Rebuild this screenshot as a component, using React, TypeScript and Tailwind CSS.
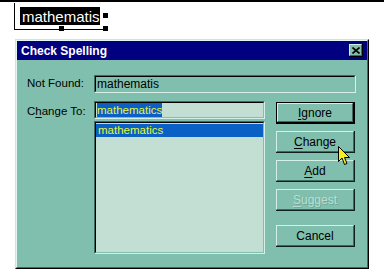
import React from "react";

const font = { fontFamily: '"Liberation Sans", Arial, sans-serif' };

function Btn({
  label,
  ul,
  rest,
  isDefault,
  disabled,
  className = "",
}: {
  label?: string;
  ul?: string;
  rest?: string;
  isDefault?: boolean;
  disabled?: boolean;
  className?: string;
}) {
  const inner = (
    <div className="flex h-full w-full items-center justify-center border border-t-[#d4efe6] border-l-[#d4efe6] border-r-[#3c6a5e] border-b-[#3c6a5e] bg-[#80bfae]">
      <span
        className={`text-[12px] ${disabled ? "text-[#b8dfd2] [text-shadow:1px_1px_0_#6fa898]" : "text-black"}`}
      >
        {ul ? <span className="underline underline-offset-2">{ul}</span> : null}
        {rest ?? label}
      </span>
    </div>
  );
  return (
    <div
      className={`h-[22px] w-[79px] ${
        isDefault
          ? "border border-black border-b-2 border-r-2"
          : "border-b border-r border-[#10201c]"
      } ${className}`}
    >
      {inner}
    </div>
  );
}

function Sunken({ className = "", children }: { className?: string; children?: React.ReactNode }) {
  return (
    <div
      className={`border border-t-[#3e6c60] border-l-[#3e6c60] border-r-[#d6efe7] border-b-[#d6efe7] ${className}`}
    >
      <div className="h-full w-full border border-t-black border-l-black border-r-[#80bfae] border-b-[#80bfae]">
        {children}
      </div>
    </div>
  );
}

export default function App() {
  return (
    <div className="relative h-[280px] w-[384px] overflow-hidden border-t-2 border-black bg-white" style={font}>
      {/* text selection in document */}
      <div className="relative ml-[14px] mt-[1px] h-[27px] w-[90px] border-b border-l border-black pl-[5px] pt-[4px]">
        <div className="flex h-[18px] w-[80px] items-center bg-black pl-[2px] text-[15px] leading-none text-white">
          mathematis
        </div>
        <div className="absolute left-[88px] top-[10px] h-[5px] w-[5px] bg-black" />
        <div className="absolute left-[44px] top-[23px] h-[5px] w-[5px] bg-black" />
        <div className="absolute left-[88px] top-[23px] h-[5px] w-[5px] bg-black" />
      </div>

      {/* dialog */}
      <div className="ml-[15px] mt-[9px] h-[230px] w-[354px] border border-t-[#c8e6dc] border-l-[#c8e6dc] border-b-black border-r-black bg-[#80bfae]">
        <div className="h-full w-full border border-t-[#e4f6f0] border-l-[#e4f6f0] border-b-[#3e6c60] border-r-[#3e6c60]">
          {/* title bar */}
          <div className="flex h-[19px] items-center justify-between bg-[#000080] pl-[4px] pr-[4px]">
            <span className="text-[12px] font-bold text-white">Check Spelling</span>
            <div className="h-[13px] w-[14px] border-b border-r border-black">
              <div className="flex h-full w-full items-center justify-center border border-t-[#d4efe6] border-l-[#d4efe6] border-b-[#3c6a5e] border-r-[#3c6a5e] bg-[#80bfae]">
                <svg width="8" height="7" viewBox="0 0 8 7">
                  <path d="M0.5 0.5 L7.5 6.5 M7.5 0.5 L0.5 6.5" stroke="black" strokeWidth="1.6" />
                </svg>
              </div>
            </div>
          </div>

          <div className="pl-[10px] pr-[11px] pt-[15px]">
            {/* Not Found */}
            <div className="flex items-center">
              <div className="w-[67px] text-[11.5px] text-black">Not Found:</div>
              <Sunken className="h-[18px] flex-1">
                <div className="pl-[1px] text-[12px] leading-[14px] text-black">mathematis</div>
              </Sunken>
            </div>

            <div className="mt-[8px] flex">
              <div className="w-[67px] pt-[2px] text-[11.5px] text-black">
                C<span className="underline underline-offset-2">h</span>ange To:
              </div>
              <div className="w-[171px]">
                <Sunken className="h-[18px]">
                  <div className="flex h-full items-start bg-[#c3dfd3] pl-[1px]">
                    <span className="block h-[14px] bg-[#0a60c4] text-[11.5px] leading-[14px] text-[#e6f53a]">mathematics</span>
                  </div>
                </Sunken>
                <Sunken className="mt-[2px] h-[133px]">
                  <div className="h-full bg-[#c3dfd3] pt-[1px]">
                    <div className="h-[13px] bg-[#0a60c4] pl-[2px] text-[11.5px] leading-[13px] text-[#e6f53a]">
                      mathematics
                    </div>
                  </div>
                </Sunken>
              </div>
              <div className="ml-[11px] mt-[1px] flex flex-col">
                <Btn ul="I" rest="gnore" isDefault />
                <Btn ul="C" rest="hange" className="mt-[7px]" />
                <Btn ul="A" rest="dd" className="mt-[7px]" />
                <Btn ul="S" rest="uggest" disabled className="mt-[7px]" />
                <Btn label="Cancel" className="mt-[14px]" />
              </div>
            </div>
          </div>
        </div>
      </div>

      {/* mouse cursor */}
      <svg className="absolute left-[338px] top-[144px]" width="13" height="20" viewBox="0 0 13 20">
        <path
          d="M0.5 0.5 L0.5 15.5 L4 12 L6.5 18.5 L9 17.5 L6.5 11.5 L11.5 11.5 Z"
          fill="#f4f020"
          stroke="black"
          strokeWidth="1"
          strokeLinejoin="miter"
        />
      </svg>
    </div>
  );
}
